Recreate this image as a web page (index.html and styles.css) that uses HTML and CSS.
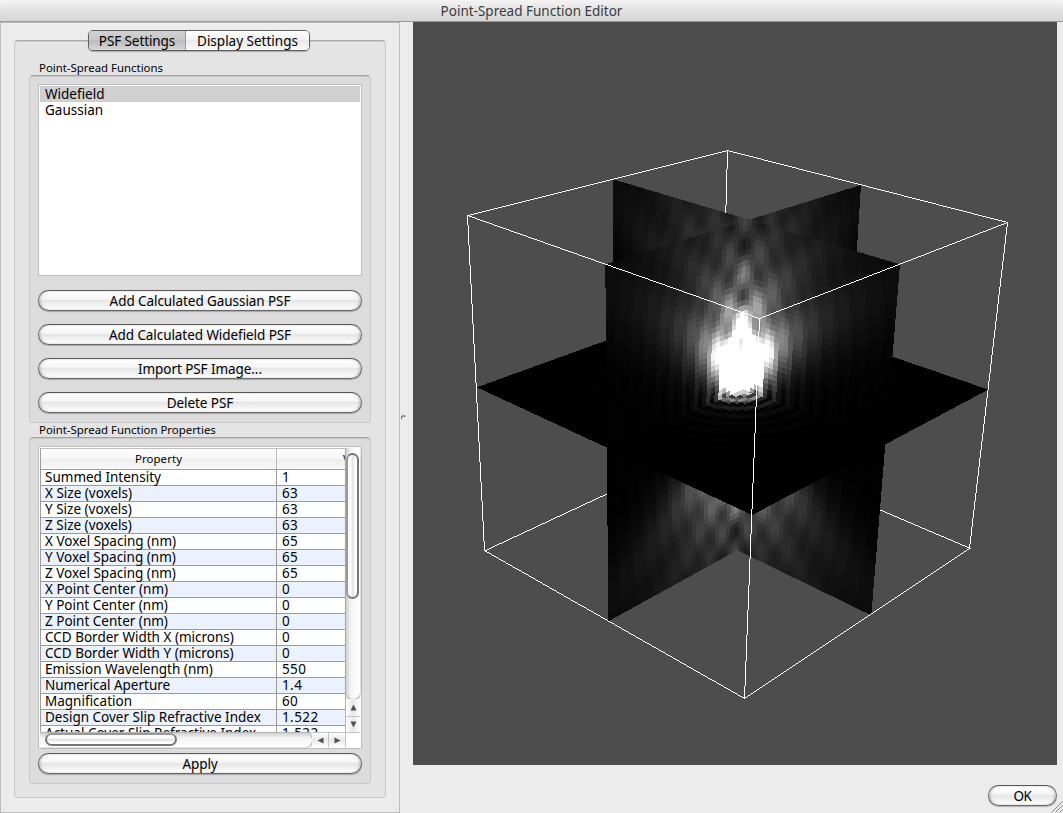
FILE: index.html
```html
<!DOCTYPE html>
<html lang="en">
<head>
<meta charset="utf-8">
<title>Point-Spread Function Editor</title>
<link rel="stylesheet" href="styles.css">
</head>
<body>
<div class="window">
  <header class="titlebar"><span>Point-Spread Function Editor</span></header>
  <main class="content">
    <section class="sidebar">
      <div class="tab-panel">
        <nav class="tabs">
          <button class="tab tab-active">PSF Settings</button>
          <button class="tab">Display Settings</button>
        </nav>
        <h2 class="group-label">Point-Spread Functions</h2>
        <div class="group group-functions">
          <ul class="list">
            <li class="selected">Widefield</li>
            <li>Gaussian</li>
          </ul>
          <button class="push">Add Calculated Gaussian PSF</button>
          <button class="push">Add Calculated Widefield PSF</button>
          <button class="push">Import PSF Image...</button>
          <button class="push">Delete PSF</button>
        </div>
        <h2 class="group-label label-properties">Point-Spread Function Properties</h2>
        <div class="group group-properties">
          <div class="table-frame">
            <div class="viewport">
              <div class="row head"><span class="name">Property</span><span class="value">Value</span></div>
              <div class="row"><span class="name">Summed Intensity</span><span class="value">1</span></div>
              <div class="row"><span class="name">X Size (voxels)</span><span class="value">63</span></div>
              <div class="row"><span class="name">Y Size (voxels)</span><span class="value">63</span></div>
              <div class="row"><span class="name">Z Size (voxels)</span><span class="value">63</span></div>
              <div class="row"><span class="name">X Voxel Spacing (nm)</span><span class="value">65</span></div>
              <div class="row"><span class="name">Y Voxel Spacing (nm)</span><span class="value">65</span></div>
              <div class="row"><span class="name">Z Voxel Spacing (nm)</span><span class="value">65</span></div>
              <div class="row"><span class="name">X Point Center (nm)</span><span class="value">0</span></div>
              <div class="row"><span class="name">Y Point Center (nm)</span><span class="value">0</span></div>
              <div class="row"><span class="name">Z Point Center (nm)</span><span class="value">0</span></div>
              <div class="row"><span class="name">CCD Border Width X (microns)</span><span class="value">0</span></div>
              <div class="row"><span class="name">CCD Border Width Y (microns)</span><span class="value">0</span></div>
              <div class="row"><span class="name">Emission Wavelength (nm)</span><span class="value">550</span></div>
              <div class="row"><span class="name">Numerical Aperture</span><span class="value">1.4</span></div>
              <div class="row"><span class="name">Magnification</span><span class="value">60</span></div>
              <div class="row"><span class="name">Design Cover Slip Refractive Index</span><span class="value">1.522</span></div>
              <div class="row"><span class="name">Actual Cover Slip Refractive Index</span><span class="value">1.522</span></div>
            </div>
            <div class="vscroll">
              <div class="vtrack"><div class="vthumb"></div></div>
              <div class="vbtn"><svg width="7" height="7" viewBox="0 0 7 7"><path d="M3.5 0.5 6.5 6.5H.5Z"/></svg></div>
              <div class="vbtn vbtn-down"><svg width="7" height="7" viewBox="0 0 7 7"><path d="M.5.5H6.5L3.5 6.5Z"/></svg></div>
            </div>
            <div class="hscroll">
              <div class="htrack"><div class="hthumb"></div></div>
              <div class="hbtn"><svg width="7" height="7" viewBox="0 0 7 7"><path d="M6.5.5V6.5L.5 3.5Z"/></svg></div>
              <div class="hbtn hbtn-right"><svg width="7" height="7" viewBox="0 0 7 7"><path d="M.5.5 6.5 3.5.5 6.5Z"/></svg></div>
            </div>
            <div class="corner"></div>
          </div>
          <button class="push apply">Apply</button>
        </div>
      </div>
    </section>
    <div class="splitter"><svg width="5" height="5" viewBox="0 0 5 5"><path d="M.8 4A2 2 0 0 1 4.2 1.8" fill="none" stroke="#777" stroke-width="1.4"/><path d="M2.5 4.5 4.5 3.3" stroke="#fff"/></svg></div>
    <section class="right">
      <canvas id="volume" class="volume" width="644" height="743"></canvas>
      <footer class="footer"><button class="push ok">OK</button></footer>
    </section>
  </main>
  <svg class="grip" width="12" height="12" viewBox="0 0 12 12"><path d="M0.5 11.5 11.5.5M4.5 11.5 11.5 4.5M8.5 11.5 11.5 8.5" stroke="#8a8a8a" fill="none"/></svg>
</div>
<script src="volume.js"></script>
</body>
</html>
```
FILE: styles.css
```css
* { box-sizing: border-box; }
body {
  margin: 0;
  background: #fff;
  font-family: "Lucida Grande", "Noto Sans", "Open Sans", sans-serif;
  font-size: 13.5px;
  color: #000;
}
button { font: inherit; color: inherit; letter-spacing: inherit; padding: 0; margin: 0; }
.window {
  position: relative;
  width: 1063px;
  height: 813px;
  background: #ececec;
  display: flex;
  flex-direction: column;
  overflow: hidden;
  border-radius: 4px 4px 0 0;
  letter-spacing: 0;
}
.titlebar {
  flex: none;
  height: 22px;
  line-height: 22px;
  text-align: center;
  color: #3c3c3c;
  background: linear-gradient(#f4f4f4, #e4e4e4 45%, #d6d6d6);
  border-bottom: 1px solid #989898;
}
.content { flex: 1; display: flex; min-height: 0; }
.sidebar {
  width: 400px;
  border: 1px solid #bcbcbc;
  padding: 17px 13px 14px 13px;
  display: flex;
}
.tab-panel {
  flex: 1;
  display: flex;
  flex-direction: column;
  background: #e4e4e4;
  border: 1px solid #c9c9c9;
  border-top: 1px solid #a9a9a9;
  box-shadow: inset 0 1px 0 #cfcfcf;
  border-radius: 4px;
  padding: 1px 14px 0;
}
.tabs {
  align-self: center;
  display: flex;
  width: 222px;
  height: 21px;
  margin-top: -12px;
  border: 1px solid #5e5e5e;
  border-radius: 5px;
  overflow: hidden;
  box-shadow: 0 1px 1px rgba(0,0,0,.25);
  flex: none;
  margin-left: -2px;
}
.tab {
  border: 0;
  flex: 1;
  line-height: 18px;
  background: linear-gradient(#fff, #f3f3f3 48%, #e9e9e9 50%, #fafafa);
}
.tab-active {
  flex: none;
  width: 97px;
  letter-spacing: -0.1px;
  border-right: 1px solid #999;
  background: linear-gradient(#d2d2d2, #c6c6c6 48%, #bcbcbc 52%, #d8d8d8);
}
.group-label {
  margin: 8px 0 0 10px;
  height: 16px;
  line-height: 17px;
  font-size: 11.4px;
  font-weight: 400;
  white-space: nowrap;
}
.label-properties { margin-top: -2px; }
.group {
  background: #dcdcdc;
  border: 1px solid #c8c8c8;
  border-top: 1px solid #a4a4a4;
  box-shadow: inset 0 1px 0 #c6c6c6;
  border-radius: 4px;
  padding: 0 8px;
  display: flex;
  flex-direction: column;
}
.group-functions { height: 348px; padding-top: 8px; gap: 13px; }
.group-properties { height: 347px; padding-top: 8px; }
.list {
  list-style: none;
  margin: 0 0 1px;
  padding: 1px 1px;
  height: 192px;
  background: #fff;
  border: 1px solid #bebebe;
}
.list li { height: 16px; line-height: 16px; padding-left: 5px; }
.list .selected { background: #d0d0d0; height: 16px; }
.push {
  height: 21px;
  line-height: 18px;
  flex: none;
  letter-spacing: -0.07px;
  border: 1px solid #6a6a6a;
  border-top-color: #585858;
  border-radius: 10.5px;
  background: linear-gradient(#fff, #f6f6f6 42%, #e6e6e6 50%, #f0f0f0 70%, #fff);
  box-shadow: 0 1px 1px rgba(0,0,0,.25), inset 2px 0 2px rgba(0,0,0,.14), inset -2px 0 2px rgba(0,0,0,.14);
}
.table-frame {
  height: 303px;
  flex: none;
  border: 1px solid #bebebe;
  background: #fff;
  padding: 1px;
  display: grid;
  grid-template-columns: 305px 15px;
  grid-template-rows: 284px 15px;
}
.viewport { overflow: hidden; border-left: 1px solid #9e9e9e; border-top: 1px solid #bebebe; }
.row {
  display: flex;
  width: 420px;
  height: 16px;
  line-height: 15px;
  border-bottom: 1px solid #9b9b9b;
  white-space: nowrap;
}
.row:nth-child(odd) { background: #ebf2fe; }
.row .name { width: 236px; padding-left: 4px; border-right: 1px solid #9b9b9b; flex: none; }
.row .value { padding-left: 5px; letter-spacing: 0.4px; }
.row.head {
  height: 21px;
  line-height: 19px;
  font-size: 11.4px;
  text-align: center;
  letter-spacing: 0.1px;
  background: linear-gradient(#fff, #f6f6f6 48%, #eee 52%, #f9f9f9);
}
.row.head .name { padding: 0; border-color: #bbb; }
.row.head .value { padding: 0 0 0 66px; letter-spacing: 0; }
.vscroll { display: flex; flex-direction: column; border-left: 1px solid #b5b5b5; background: #f0f0f0; }
.vtrack {
  flex: 1;
  border-radius: 0 0 7px 7px;
  padding-top: 5px;
  background: linear-gradient(90deg, #cfcfcf, #f4f4f4 35%, #fff);
  box-shadow: 0 1px 2px #888;
}
.vthumb {
  height: 146px;
  width: 13px;
  border: 2px solid #777;
  border-left-color: #999;
  border-radius: 7px;
  background: linear-gradient(90deg, #fff, #fafafa 35%, #e3e3e3 50%, #fff 85%);
}
.vbtn { flex: none; height: 17px; display: flex; align-items: center; justify-content: center; background: linear-gradient(90deg, #fff, #e8e8e8 50%, #fff); }
.vbtn-down { height: 16px; border-top: 1px solid #c4c4c4; }
.vbtn svg, .hbtn svg { fill: #505050; }
.hscroll { display: flex; background: #f0f0f0; border-top: 1px solid #c4c4c4; }
.htrack {
  width: 272px;
  padding-left: 5px;
  border-radius: 0 7px 7px 0;
  background: linear-gradient(#d0d0d0, #f4f4f4 35%, #fff);
  box-shadow: 1px 0 2px #888;
}
.hthumb {
  width: 132px;
  height: 13px;
  border: 2px solid #777;
  border-top-color: #999;
  border-radius: 7px;
  background: linear-gradient(#fff, #fafafa 35%, #e3e3e3 50%, #fff 85%);
}
.hbtn { flex: 1; display: flex; align-items: center; justify-content: center; background: linear-gradient(#fff, #e8e8e8 50%, #fff); }
.hbtn-right { border-left: 1px solid #c4c4c4; }
.corner { border: 1px solid #c4c4c4; border-width: 1px 0 0 1px; background: #fff; }
.apply { margin-top: 4px; }
.splitter { width: 13px; display: flex; align-items: center; padding: 0 0 0 1px; }
.right { flex: 1; display: flex; flex-direction: column; }
.volume { display: block; width: 644px; height: 743px; background: #4d4d4d; }
.footer { display: flex; justify-content: flex-end; padding: 20px 6px 0 0; }
.ok { width: 69px; line-height: 18px; letter-spacing: -0.4px; }
.grip { position: absolute; right: 0; bottom: 0; }
```
FILE: volume.js
```js
// Renders three orthogonal slices of a widefield point-spread function inside a wireframe box.
(function () {
  var canvas = document.getElementById('volume');
  var ctx = canvas.getContext('2d');
  var W = canvas.width, H = canvas.height, OX = 413, OY = 22;
  var img = ctx.createImageData(W, H);
  var px = img.data;

  // Optical parameters, distances in voxels
  var N = 63, PEAK = 31, GAIN = 36;
  var NA = 1.4, INDEX = 1.515, K = 2 * Math.PI * 65 / 550;
  var STEPS = 90, RSTEP = 0.25, RCOUNT = 184;

  function j0(x) {
    var s = 0, n = 64;
    for (var i = 0; i < n; i++) s += Math.cos(x * Math.cos(Math.PI * (i + 0.5) / n));
    return s / n;
  }
  var phase = [];
  for (var z = 0; z <= 32; z++) {
    var row = [];
    for (var q = 0; q < STEPS; q++) {
      var p = (q + 0.5) / STEPS;
      var a = K * INDEX * z * Math.sqrt(1 - Math.pow(NA * p / INDEX, 2));
      row.push([Math.cos(a) * p, Math.sin(a) * p]);
    }
    phase.push(row);
  }
  var table = [];
  for (var r = 0; r < RCOUNT; r++) {
    var b = [], col = [];
    for (q = 0; q < STEPS; q++) b.push(j0(K * NA * r * RSTEP * (q + 0.5) / STEPS));
    for (z = 0; z <= 32; z++) {
      var re = 0, im = 0;
      for (q = 0; q < STEPS; q++) { re += b[q] * phase[z][q][0]; im += b[q] * phase[z][q][1]; }
      re *= 2 / STEPS; im *= 2 / STEPS;
      col.push(re * re + im * im);
    }
    table.push(col);
  }
  function shade(x, y, z) {
    var rr = Math.round(Math.hypot(x - PEAK, y - PEAK) / RSTEP);
    return Math.min(255, 255 * GAIN * table[Math.min(rr, RCOUNT - 1)][Math.min(32, Math.abs(z - PEAK))]);
  }

  // Inverse homography: screen point to unit square for corners (0,0) (1,0) (1,1) (0,1)
  function inverse(c) {
    var x0 = c[0][0], y0 = c[0][1], x1 = c[1][0], y1 = c[1][1], x2 = c[2][0], y2 = c[2][1], x3 = c[3][0], y3 = c[3][1];
    var dx1 = x1 - x2, dx2 = x3 - x2, dx3 = x0 - x1 + x2 - x3;
    var dy1 = y1 - y2, dy2 = y3 - y2, dy3 = y0 - y1 + y2 - y3;
    var d = dx1 * dy2 - dx2 * dy1;
    var g = (dx3 * dy2 - dx2 * dy3) / d, h = (dx1 * dy3 - dx3 * dy1) / d;
    var a = x1 - x0 + g * x1, b = x3 - x0 + h * x3, cc = x0;
    var e = y1 - y0 + g * y1, f = y3 - y0 + h * y3, k = y0;
    return [f - k * h, cc * h - b, b * k - cc * f, k * g - e, a - cc * g, cc * e - a * k, e * h - f * g, b * g - a * h, a * f - b * e];
  }
  function apply(m, x, y) {
    var w = m[6] * x + m[7] * y + m[8];
    return [(m[0] * x + m[1] * y + m[2]) / w, (m[3] * x + m[4] * y + m[5]) / w];
  }
  var cell = function (t) { return Math.max(0, Math.min(N - 1, Math.floor(t * N))); };
  var SLICE = 32;

  // Corners: bottom start, bottom end, top end, top start
  var planeX = inverse([[613.3, 490], [871.3, 615.3], [900, 264.3], [613, 179.3]]);
  var planeY = inverse([[608.3, 621.3], [841.5, 493], [861, 185], [605.3, 264.3]]);
  var planeZ = inverse([[476.8, 387.3], [752.3, 515], [988.3, 389.6], [722.8, 298.4]]);
  var sx = function (u, v) { return shade(cell(u), SLICE, cell(v)); };
  var sy = function (u, v) { return shade(SLICE, cell(u), cell(v)); };
  var sz = function (u, v) { return 0.8 * shade(cell(u), cell(v), SLICE); };
  var axisX = apply(planeX, 743.5, 388)[0], axisY = apply(planeY, 743.5, 388)[0];
  var midX = apply(planeX, 743.6, 389.2)[1], midY = apply(planeY, 743.6, 389.2)[1];

  // Surfaces from nearest to farthest
  var parts = [
    [planeX, sx, axisX, 1, midX, 1], [planeY, sy, 0, axisY, midY, 1],
    [planeX, sx, 0, axisX, midX, 1], [planeY, sy, axisY, 1, midY, 1],
    [planeZ, sz, 0, 1, 0, 1],
    [planeX, sx, axisX, 1, 0, midX], [planeY, sy, 0, axisY, 0, midY],
    [planeX, sx, 0, axisX, 0, midX], [planeY, sy, axisY, 1, 0, midY]
  ];

  function plot(x, y, v) {
    var i = ((y - OY) * W + (x - OX)) * 4;
    px[i] = px[i + 1] = px[i + 2] = v;
    px[i + 3] = 255;
  }
  function line(x0, y0, x1, y1) {
    var n = Math.max(Math.abs(x1 - x0), Math.abs(y1 - y0));
    for (var i = 0; i <= n; i++) plot(Math.round(x0 + (x1 - x0) * i / n), Math.round(y0 + (y1 - y0) * i / n), 255);
  }

  for (var y = OY; y < OY + H; y++) for (var x = OX; x < OX + W; x++) plot(x, y, 77);
  line(727, 150, 719, 441);
  line(485, 550, 719, 441);
  line(970, 548, 719, 441);
  for (y = 150; y < 700; y++) {
    for (x = 460; x < 1010; x++) {
      for (var s = 0; s < parts.length; s++) {
        var t = parts[s], c = apply(t[0], x + 0.5, y + 0.5);
        if (c[0] >= t[2] && c[0] <= t[3] && c[1] >= t[4] && c[1] <= t[5]) {
          plot(x, y, t[1](c[0], c[1]));
          break;
        }
      }
    }
  }
  [[467, 215, 727, 150], [727, 150, 1007, 222], [467, 215, 759, 318], [759, 318, 1007, 222],
   [467, 215, 484, 550], [1007, 222, 969, 548], [759, 318, 744, 698], [484, 550, 744, 698], [744, 698, 969, 548]
  ].forEach(function (l) { line(l[0], l[1], l[2], l[3]); });
  ctx.putImageData(img, 0, 0);
})();
```
